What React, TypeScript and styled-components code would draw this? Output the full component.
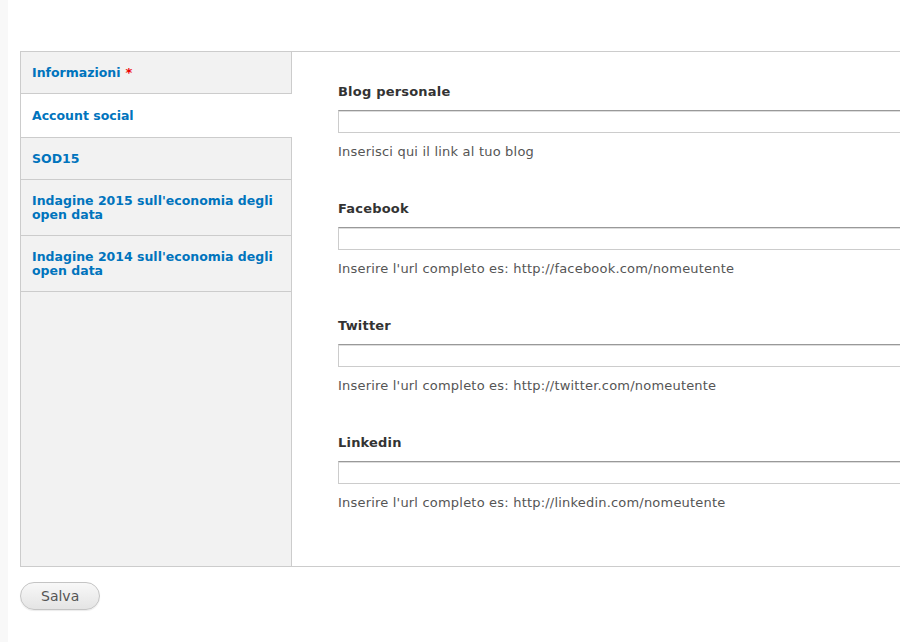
import React from "react";
import styled, { createGlobalStyle } from "styled-components";

const Global = createGlobalStyle`
  html, body { margin: 0; padding: 0; background: #fff; }
  body { font-family: "DejaVu Sans", Verdana, sans-serif; overflow: hidden; }
  * { box-sizing: border-box; }
`;

const Page = styled.div`
  width: 900px;
  height: 642px;
  overflow: hidden;
  border-left: 8px solid #f8f8f8;
  padding: 51px 0 0 12px;
`;

const Tabs = styled.div`
  display: flex;
  align-items: stretch;
  border: 1px solid #ccc;
  border-right: none;
  margin-right: -120px;
`;

const TabList = styled.ul`
  list-style: none;
  margin: 0;
  padding: 0;
  width: 271px;
  flex: none;
  background: #f2f2f2;
  border-right: 1px solid #ccc;
`;

const Tab = styled.li<{ $active?: boolean }>`
  padding: ${(p) => (p.$active ? "15px 11px 14px" : "14px 11px 13px")};
  border-bottom: 1px solid #ccc;
  font-size: 12.5px;
  line-height: 14px;
  font-weight: bold;
  color: #0074bd;
  background: ${(p) => (p.$active ? "#fff" : "transparent")};
  margin-right: ${(p) => (p.$active ? "-1px" : "0")};
`;

const Req = styled.span`
  color: #e00;
  margin-left: 5px;
  font-size: 13px;
`;

const Content = styled.div`
  flex: 1;
  padding: 31px 0 54px 46px;
  display: flex;
  flex-direction: column;
  gap: 39px;
`;

const Field = styled.div`
  display: flex;
  flex-direction: column;
`;

const Label = styled.label`
  font-size: 13px;
  line-height: 18px;
  letter-spacing: 0.2px;
  font-weight: bold;
  color: #333;
  margin-bottom: 9px;
`;

const Input = styled.input`
  height: 23px;
  width: 100%;
  border: 1px solid #ccc;
  border-top-color: #999;
  box-shadow: inset 0 1px 0 #ddd;
  background: #fff;
  margin: 0;
  padding: 0 4px;
`;

const Desc = styled.div`
  margin-top: 10px;
  font-size: 13px;
  line-height: 18px;
  letter-spacing: 0.2px;
  color: #555;
`;

const Button = styled.button`
  margin-top: 15px;
  height: 28px;
  padding: 0 20px;
  border-radius: 14px;
  border: 1px solid #c4c4c4;
  background: linear-gradient(#f8f8f8, #e4e4e4);
  box-shadow: 0 1px 1px rgba(0,0,0,0.08);
  font-family: "DejaVu Sans", Verdana, sans-serif;
  font-size: 14px;
  color: #555;
`;

const fields = [
  { label: "Blog personale", desc: "Inserisci qui il link al tuo blog" },
  { label: "Facebook", desc: "Inserire l'url completo es: http://facebook.com/nomeutente" },
  { label: "Twitter", desc: "Inserire l'url completo es: http://twitter.com/nomeutente" },
  { label: "Linkedin", desc: "Inserire l'url completo es: http://linkedin.com/nomeutente" },
];

export default function App() {
  return (
    <Page>
      <Global />
      <Tabs>
        <TabList>
          <Tab>
            Informazioni<Req>*</Req>
          </Tab>
          <Tab $active>Account social</Tab>
          <Tab>SOD15</Tab>
          <Tab>
            Indagine 2015 sull'economia degli
            <br />
            open data
          </Tab>
          <Tab>
            Indagine 2014 sull'economia degli
            <br />
            open data
          </Tab>
        </TabList>
        <Content>
          {fields.map((f) => (
            <Field key={f.label}>
              <Label>{f.label}</Label>
              <Input type="text" />
              <Desc>{f.desc}</Desc>
            </Field>
          ))}
        </Content>
      </Tabs>
      <Button>Salva</Button>
    </Page>
  );
}
